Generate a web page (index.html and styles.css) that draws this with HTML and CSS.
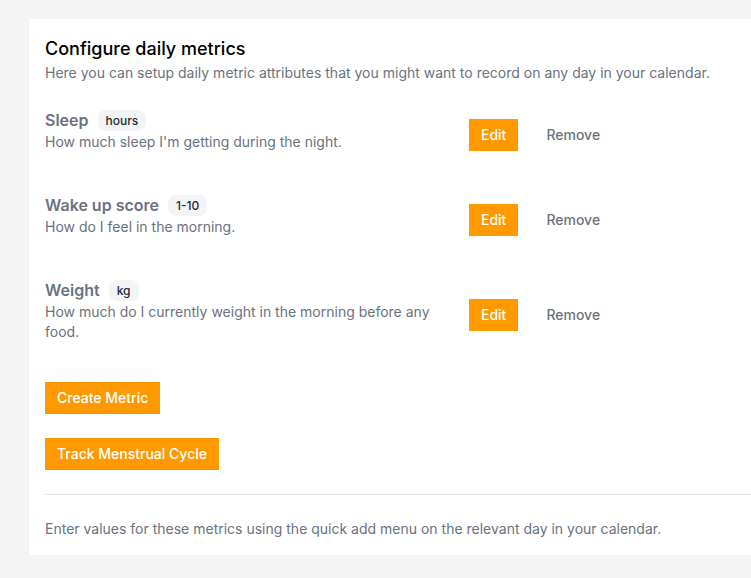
FILE: index.html
```html
<!DOCTYPE html>
<html lang="en">
<head>
<meta charset="utf-8">
<title>Configure daily metrics</title>
<link rel="stylesheet" href="styles.css">
</head>
<body>
<div class="page">
  <section class="card">
    <h1 class="title">Configure daily metrics</h1>
    <p class="subtitle">Here you can setup daily metric attributes that you might want to record on any day in your calendar.</p>

    <ul class="metrics">
      <li class="metric">
        <div class="metric-info">
          <div class="metric-head">
            <span class="metric-name">Sleep</span>
            <span class="badge">hours</span>
          </div>
          <p class="metric-desc">How much sleep I'm getting during the night.</p>
        </div>
        <div class="metric-actions">
          <button class="btn btn-primary">Edit</button>
          <button class="btn btn-link">Remove</button>
        </div>
      </li>
      <li class="metric">
        <div class="metric-info">
          <div class="metric-head">
            <span class="metric-name">Wake up score</span>
            <span class="badge">1-10</span>
          </div>
          <p class="metric-desc">How do I feel in the morning.</p>
        </div>
        <div class="metric-actions">
          <button class="btn btn-primary">Edit</button>
          <button class="btn btn-link">Remove</button>
        </div>
      </li>
      <li class="metric">
        <div class="metric-info">
          <div class="metric-head">
            <span class="metric-name">Weight</span>
            <span class="badge">kg</span>
          </div>
          <p class="metric-desc">How much do I currently weight in the morning before any food.</p>
        </div>
        <div class="metric-actions">
          <button class="btn btn-primary">Edit</button>
          <button class="btn btn-link">Remove</button>
        </div>
      </li>
    </ul>

    <div class="create-actions">
      <button class="btn btn-primary">Create Metric</button>
      <button class="btn btn-primary">Track Menstrual Cycle</button>
    </div>

    <hr class="divider">

    <p class="footer-note">Enter values for these metrics using the quick add menu on the relevant day in your calendar.</p>
  </section>
</div>
</body>
</html>
```

FILE: styles.css
```css
html, body {
  margin: 0;
  padding: 0;
  overflow: hidden;
  background: #f4f4f4;
}

body {
  font-family: Inter, "Noto Sans", "Liberation Sans", sans-serif;
  color: #111827;
  -webkit-font-smoothing: antialiased;
}

.page {
  padding: 19px 0 0 29px;
  min-height: 578px;
  box-sizing: border-box;
}

.card {
  background: #ffffff;
  width: 800px;
  padding: 16px;
  box-sizing: border-box;
}

.title {
  margin: 0;
  font-size: 18px;
  line-height: 28px;
  font-weight: 500;
  color: #000000;
}

.subtitle {
  margin: 0;
  font-size: 14px;
  line-height: 20px;
  color: #6b7280;
}

.metrics {
  list-style: none;
  margin: 5px 0 0;
  padding: 0;
}

.metric {
  display: flex;
  align-items: center;
  padding: 20px 0 21px;
}

.metric-info {
  width: 400px;
  margin-right: 24px;
  flex: none;
}

.metric-head {
  display: flex;
  align-items: center;
  gap: 9px;
}

.metric-name {
  font-size: 16px;
  line-height: 24px;
  font-weight: 600;
  color: #6b7280;
}

.badge {
  display: inline-block;
  background: #f3f4f6;
  color: #1f2937;
  font-size: 12px;
  line-height: 17px;
  font-weight: 500;
  padding: 2px 8px;
  border-radius: 8px;
}

.metric-desc {
  margin: 0;
  font-size: 14px;
  line-height: 20px;
  color: #6b7280;
}

.metric-actions {
  display: flex;
  align-items: center;
  gap: 16px;
  padding-top: 9px;
}

.btn {
  font-family: inherit;
  font-size: 14px;
  line-height: 20px;
  height: 32px;
  padding: 6px 12px;
  border: none;
  border-radius: 0;
  cursor: pointer;
  box-sizing: border-box;
}

.btn-primary {
  background: #ff9900;
  color: #ffffff;
  font-weight: 500;
}

.btn-link {
  background: transparent;
  color: #6b7280;
  font-weight: 500;
}

.create-actions {
  display: flex;
  flex-direction: column;
  align-items: flex-start;
  gap: 24px;
  margin-top: 19px;
}

.divider {
  border: none;
  border-top: 1px solid #e5e7eb;
  margin: 24px 0 0;
  height: 0;
}

.footer-note {
  margin: 24px 0 0;
  font-size: 14px;
  line-height: 20px;
  color: #6b7280;
}
```
